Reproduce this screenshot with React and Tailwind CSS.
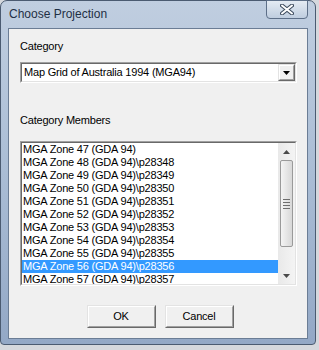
import React from 'react';

const members = [
  'MGA Zone 47 (GDA 94)',
  'MGA Zone 48 (GDA 94)\\p28348',
  'MGA Zone 49 (GDA 94)\\p28349',
  'MGA Zone 50 (GDA 94)\\p28350',
  'MGA Zone 51 (GDA 94)\\p28351',
  'MGA Zone 52 (GDA 94)\\p28352',
  'MGA Zone 53 (GDA 94)\\p28353',
  'MGA Zone 54 (GDA 94)\\p28354',
  'MGA Zone 55 (GDA 94)\\p28355',
  'MGA Zone 56 (GDA 94)\\p28356',
  'MGA Zone 57 (GDA 94)\\p28357',
];

const Sunken = ({ className, children }) => (
  <div className={`border-t border-l border-t-[#a0a0a0] border-l-[#a0a0a0] border-b border-r border-b-white border-r-white ${className}`}>
    <div className="h-full w-full border-t border-l border-t-[#696969] border-l-[#696969] border-b border-r border-b-[#e3e3e3] border-r-[#e3e3e3] bg-white flex overflow-hidden">
      {children}
    </div>
  </div>
);

const Arrow = ({ up }) => (
  <svg width="7" height="4" viewBox="0 0 7 4">
    {up ? <path d="M0 4 L3.5 0 L7 4 Z" fill="#4a4a4a" /> : <path d="M0 0 L3.5 4 L7 0 Z" fill="#4a4a4a" />}
  </svg>
);

const Button = ({ children }) => (
  <div className="w-[69px] h-[23px] border-t border-l border-t-[#e3e3e3] border-l-[#e3e3e3] border-b border-r border-b-[#696969] border-r-[#696969]">
    <div className="h-full w-full border-t border-l border-t-white border-l-white border-b border-r border-b-[#a0a0a0] border-r-[#a0a0a0] bg-[#f0f0f0] flex items-center justify-center text-black">
      {children}
    </div>
  </div>
);

export default function App() {
  return (
    <div className="w-[319px] h-[350px] bg-[#d5d8dd] font-['Liberation_Sans',Arial,sans-serif]">
      <div className="w-[316px] h-[345px] rounded-t-[7px] rounded-b-[4px] border border-[#4b5b71] bg-gradient-to-b from-[#c0cee0] via-[#aabdd5] to-[#93a8c6] flex flex-col px-[7px] pb-[5px]">
        {/* title bar */}
        <div className="h-[27px] flex items-start justify-between">
          <span className="mt-[6px] ml-px text-[12px] leading-[14px] text-[#1e2f45]">Choose Projection</span>
          <div className="-mt-px w-[42px] h-[19px] rounded-b-[4px] border border-[#5d6f88] bg-gradient-to-b from-[#e4ebf3] to-[#bfcddf] flex items-center justify-center">
            <svg width="14" height="11" viewBox="0 0 14 11">
              <path d="M2 1.5 L12 9.5 M12 1.5 L2 9.5" stroke="#3d4b5e" strokeWidth="4" strokeLinecap="round" />
              <path d="M2 1.5 L12 9.5 M12 1.5 L2 9.5" stroke="#ffffff" strokeWidth="2" strokeLinecap="round" />
            </svg>
          </div>
        </div>

        {/* client area */}
        <div className="flex-1 border border-[#6b7d95] bg-[#f0f0f0] flex flex-col pl-[11px] pr-[10px] text-[11px] leading-[13px] tracking-[-0.2px] text-black">
          <div className="mt-[11px]">Category</div>

          <Sunken className="mt-[9px] h-[21px]">
            <div className="flex-1 pl-[2px] pt-[2px] whitespace-nowrap">Map Grid of Australia 1994 (MGA94)</div>
            <div className="w-[17px] h-[17px] border-t border-l border-t-[#e3e3e3] border-l-[#e3e3e3] border-b border-r border-b-[#696969] border-r-[#696969]">
              <div className="h-full w-full border-t border-l border-t-white border-l-white border-b border-r border-b-[#a0a0a0] border-r-[#a0a0a0] bg-[#f0f0f0] flex items-center justify-center">
                <svg width="7" height="4" viewBox="0 0 7 4">
                  <path d="M0 0 L3.5 4 L7 0 Z" fill="#000" />
                </svg>
              </div>
            </div>
          </Sunken>

          <div className="mt-[31px]">Category Members</div>

          <Sunken className="mt-[14px] h-[145px]">
            <div className="flex-1 overflow-hidden">
              {members.map((m, i) => (
                <div
                  key={m}
                  className={`h-[13px] pl-px whitespace-nowrap ${i === 9 ? 'bg-[#3399ff] text-white' : ''}`}
                >
                  {m}
                </div>
              ))}
            </div>
            <div className="w-[17px] h-full bg-gradient-to-r from-[#e9e9e9] to-[#f4f4f4] flex flex-col">
              <div className="h-[17px] flex items-center justify-center">
                <Arrow up />
              </div>
              <div className="mx-[2px] h-[87px] rounded-[2px] border border-[#9a9a9a] bg-gradient-to-r from-[#f4f4f4] to-[#d8d8d8] flex flex-col items-center justify-center gap-[2px]">
                <div className="w-[7px] h-px bg-[#6e6e6e]" />
                <div className="w-[7px] h-px bg-[#6e6e6e]" />
                <div className="w-[7px] h-px bg-[#6e6e6e]" />
                <div className="w-[7px] h-px bg-[#6e6e6e]" />
              </div>
              <div className="flex-1" />
              <div className="h-[17px] flex items-center justify-center">
                <Arrow />
              </div>
            </div>
          </Sunken>

          <div className="mt-[19px] flex justify-center gap-[9px] pl-[3px]">
            <Button>OK</Button>
            <Button>Cancel</Button>
          </div>
        </div>
      </div>
    </div>
  );
}
